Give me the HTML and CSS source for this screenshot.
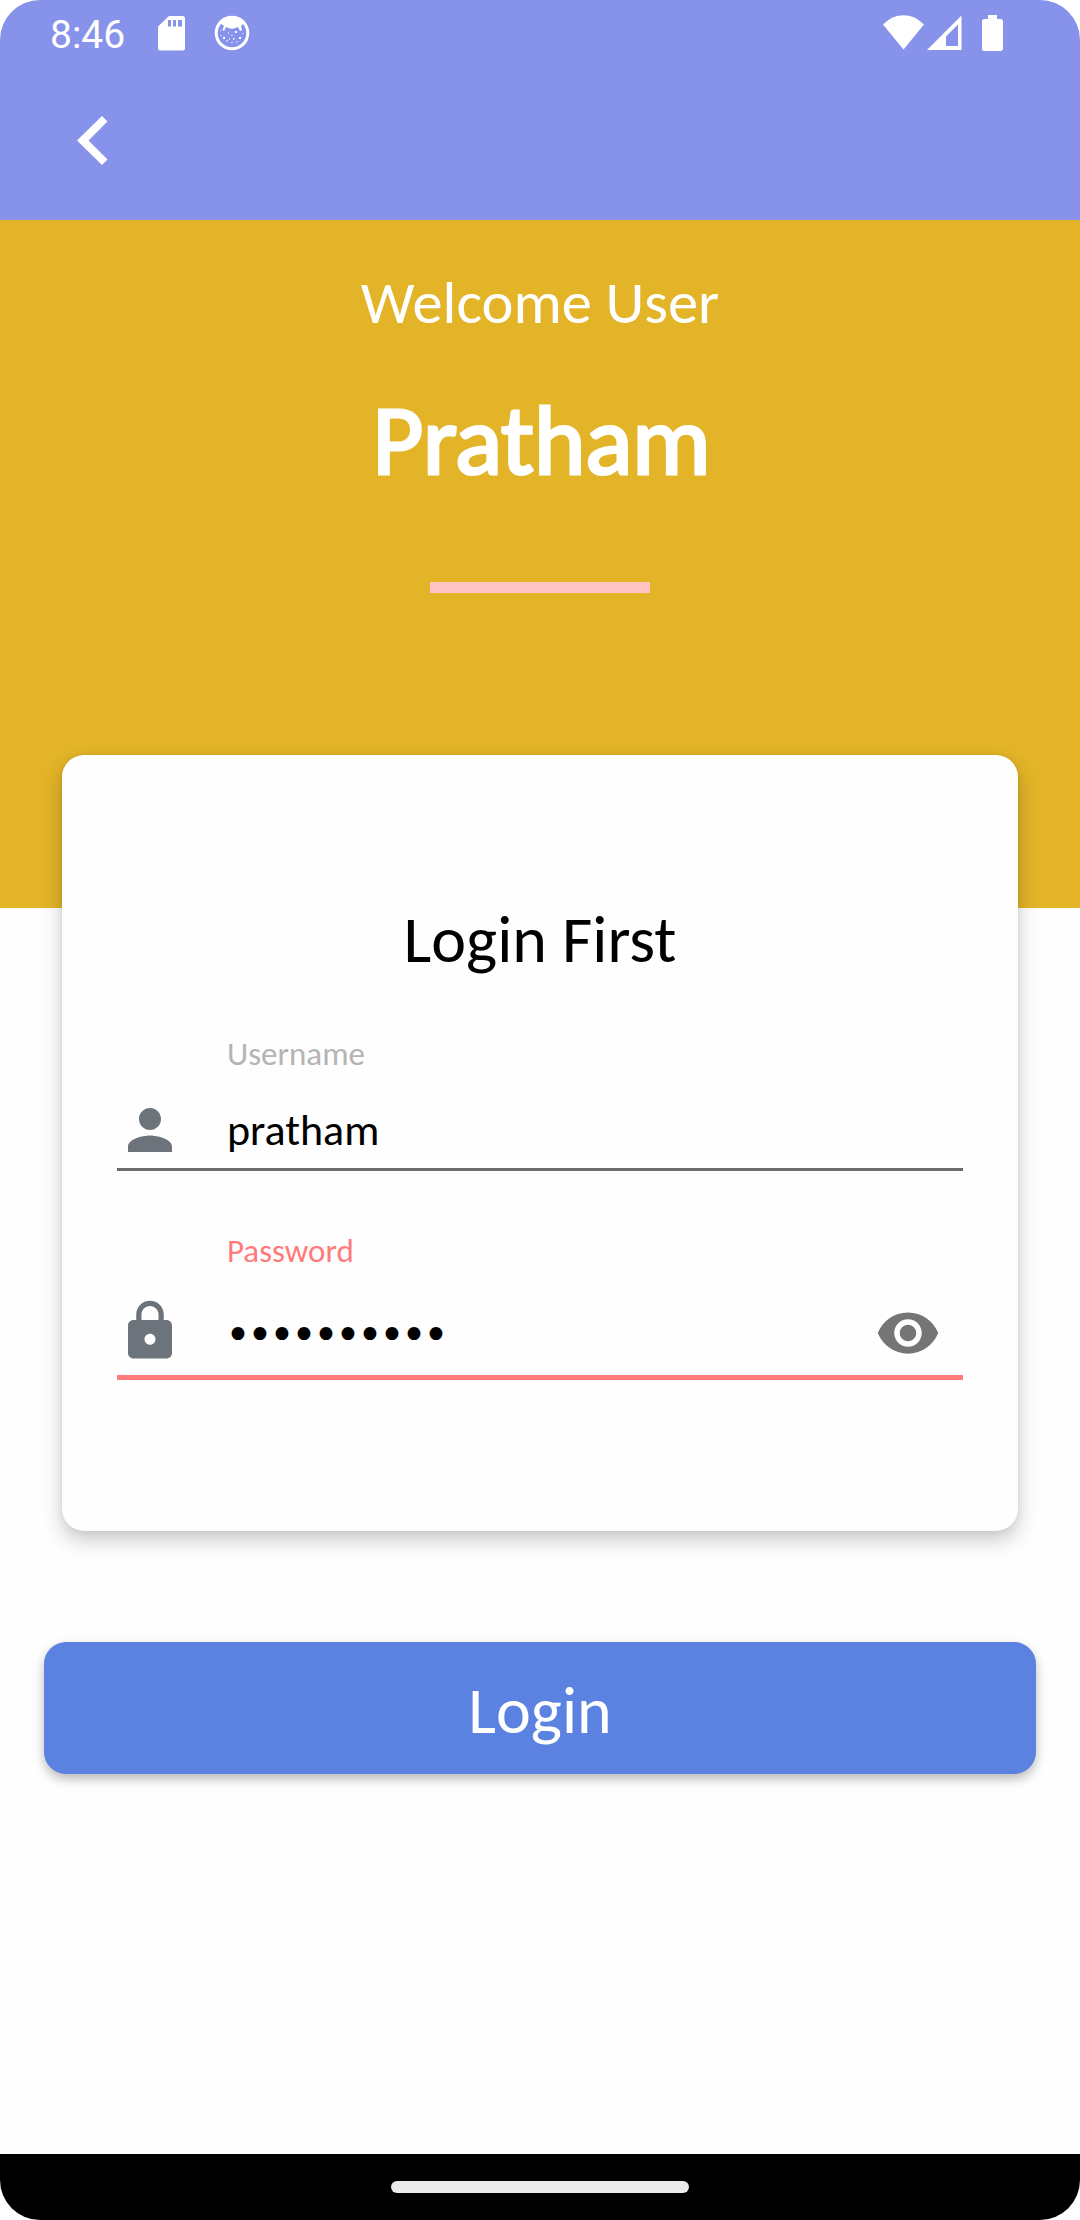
FILE: index.html
```html
<!DOCTYPE html>
<html lang="en">
<head>
<meta charset="utf-8">
<title>Login</title>
<link rel="stylesheet" href="styles.css">
</head>
<body>
<div class="screen">
  <header class="app-header">
    <div class="status-bar">
      <span class="clock">8:46</span>
      <svg class="icon-sd" width="27" height="35" viewBox="0 0 27 35"><path fill="#fff" fill-rule="evenodd" d="M11 0H24.500Q27 0 27 2.500V32Q27 34.500 24.500 34.500H2.500Q0 34.500 0 32V10.500ZM10 4V10.500H13V4ZM15 4V10.500H18V4ZM20 4V10.500H24V4Z"/></svg>
      <svg class="icon-cat" width="36" height="36" viewBox="0 0 36 36">
        <circle cx="18" cy="18" r="15.800" fill="none" stroke="#fff" stroke-width="3"/>
        <path fill="#fff" d="M6 8Q11 2 18 2T30 8L27 11L28 15L26 16L24 12Q18 15.500 12 12L10 16L8.500 15L10 11Z"/>
        <g fill="#fff"><path d="M9 22h2v2H9zM21 16h2v2h-2zM25 22h2v2h-2zM19 23h1.500v1.500H19z"/><path opacity=".6" d="M6 15h1.500v1H6zM14 17h1v2h-1zM17 20h2v1h-2zM12 25h2v1.500h-2zM15 23h1v2h-1zM22 26h1.500v1.500H22zM17 27h2v1h-2zM28 18h1.500v1H28zM6 20h2v1H6z"/></g>
      </svg>
      <svg class="icon-wifi" width="41" height="36" viewBox="0 0 41 36"><path fill="#fff" d="M0 9.500Q9 0.300 20.500 0.300T41 9.500L20.500 34.500Z"/></svg>
      <svg class="icon-signal" width="35" height="36" viewBox="0 0 35 36"><path fill="#fff" fill-rule="evenodd" d="M34.500 .5V35H0ZM31 9.500L19 21.500V31H31Z"/></svg>
      <svg class="icon-battery" width="21" height="36" viewBox="0 0 21 36"><path fill="#fff" d="M6 0H15V4H18.500Q21 4 21 6.500V33.500Q21 36 18.500 36H2.500Q0 36 0 33.500V6.500Q0 4 2.500 4H6Z"/></svg>
    </div>
    <svg class="back" width="31" height="50" viewBox="0 0 31 50"><path fill="#fff" d="M25 0L30.500 5.500L11.500 24.500L30.500 43.500L25 49L0 24.500Z"/></svg>
  </header>

  <section class="welcome">
    <p class="greeting">Welcome User</p>
    <h1 class="name">Pratham</h1>
    <div class="divider"></div>
  </section>

  <main class="content">
    <section class="card">
      <h2 class="card-title">Login First</h2>
      <div class="field">
        <span class="label">Username</span>
        <div class="input-row">
          <svg width="66" height="66" viewBox="0 0 24 24"><path fill="#6c737b" d="M12 12c2.210 0 4-1.790 4-4s-1.790-4-4-4-4 1.790-4 4 1.790 4 4 4zm0 2c-2.670 0-8 1.340-8 4v2h16v-2c0-2.660-5.330-4-8-4z"/></svg>
          <span class="value">pratham</span>
        </div>
      </div>
      <div class="field field-active">
        <span class="label">Password</span>
        <div class="input-row">
          <svg width="66" height="66" viewBox="0 0 24 24"><path fill="#6c737b" d="M18 8h-1V6c0-2.760-2.240-5-5-5S7 3.240 7 6v2H6c-1.100 0-2 .9-2 2v10c0 1.100.9 2 2 2h12c1.100 0 2-.9 2-2V10c0-1.100-.9-2-2-2zm-6 9c-1.100 0-2-.9-2-2s.9-2 2-2 2 .9 2 2-.9 2-2 2zm3.100-9H8.900V6c0-1.710 1.390-3.100 3.100-3.100 1.710 0 3.100 1.390 3.100 3.100v2z"/></svg>
          <span class="value dots">••••••••••</span>
          <svg class="eye" width="66" height="66" viewBox="0 0 24 24"><path fill="#757575" d="M12 4.500C7 4.500 2.730 7.610 1 12c1.730 4.390 6 7.500 11 7.500s9.270-3.110 11-7.500c-1.730-4.390-6-7.500-11-7.500zM12 17c-2.760 0-5-2.240-5-5s2.240-5 5-5 5 2.240 5 5-2.240 5-5 5zm0-8c-1.660 0-3 1.340-3 3s1.340 3 3 3 3-1.340 3-3-1.340-3-3-3z"/></svg>
        </div>
      </div>
    </section>
    <button class="login" type="button">Login</button>
  </main>

  <footer class="nav-bar"><div class="handle"></div></footer>
</div>
</body>
</html>
```

FILE: styles.css
```css
* { box-sizing: border-box; margin: 0; }
body { background: #fff; font-family: Carlito, Lato, sans-serif; }
svg { display: block; flex: none; }

.screen {
  width: 1080px;
  height: 2220px;
  display: flex;
  flex-direction: column;
  overflow: hidden;
  border-radius: 40px;
  background: #fefefe;
}

.app-header { height: 220px; flex: none; background: #8792ea; }
.status-bar { height: 66px; padding: 15px 77px 0 50px; display: flex; align-items: flex-start; }
.clock { width: 108px; padding-top: 1px; font: 39px/38px Roboto, sans-serif; color: #fff; }
.icon-sd { margin-top: 1px; }
.icon-cat { margin-left: 29px; }
.icon-wifi { margin-left: auto; }
.icon-signal { margin-left: 3px; }
.icon-battery { margin-left: 20px; }
.back { margin: 50px 0 0 77px; }

.welcome {
  height: 688px;
  flex: none;
  display: flex;
  flex-direction: column;
  align-items: center;
  background: #e3b428;
  color: #fff;
}
.greeting { margin-top: 48px; font-size: 60.500px; line-height: 68px; }
.name { margin-top: 49px; padding-left: 3px; font-size: 98.500px; line-height: 110px; font-weight: 400; letter-spacing: -0.300px; -webkit-text-stroke: 3px #fff; }
.divider { margin-top: 87px; width: 220px; height: 11px; background: #ffc5c5; }

.content { flex: 1; display: flex; flex-direction: column; padding: 0 44px; }
.card {
  height: 776px;
  flex: none;
  margin: -153px 18px 0;
  padding: 150px 55px 0;
  border-radius: 22px;
  background: #fefefe;
  box-shadow: 0 9px 20px rgba(0, 0, 0, .22), 0 0 5px rgba(0, 0, 0, .06);
}
.card-title { text-align: center; font-size: 66px; line-height: 70px; font-weight: 400; }

.field { height: 171px; margin-top: 25px; border-bottom: 3px solid #6c6c6c; }
.field-active { height: 180px; margin-top: 29px; border-bottom: 5px solid #ff7b7b; }
.label { display: block; height: 62px; margin-left: 110px; padding-top: 35px; font-size: 33px; line-height: 38px; color: #b4b4b4; }
.field-active .label { padding-top: 32px; color: #ff7b7b; }
.input-row { display: flex; align-items: center; height: 66px; margin-top: 35px; }
.field-active .input-row { margin-top: 36px; }
.value { margin-left: 44px; font-size: 44px; line-height: 50px; }
.dots { margin-left: 42px; padding-top: 8px; font-family: "DejaVu Sans", sans-serif; letter-spacing: -3.960px; }
.eye { margin: 4px 22px 0 auto; }

.login {
  height: 132px;
  flex: none;
  margin-top: 111px;
  padding: 6px 0 0;
  border: 0;
  border-radius: 22px;
  background: #5b81e1;
  color: #fff;
  font: 66px/70px Carlito, Lato, sans-serif;
  box-shadow: 0 5px 11px rgba(0, 0, 0, .27);
}

.nav-bar { height: 66px; flex: none; display: flex; justify-content: center; padding-top: 27px; background: #000; }
.handle { width: 298px; height: 12px; border-radius: 6px; background: #ebebeb; }
```
